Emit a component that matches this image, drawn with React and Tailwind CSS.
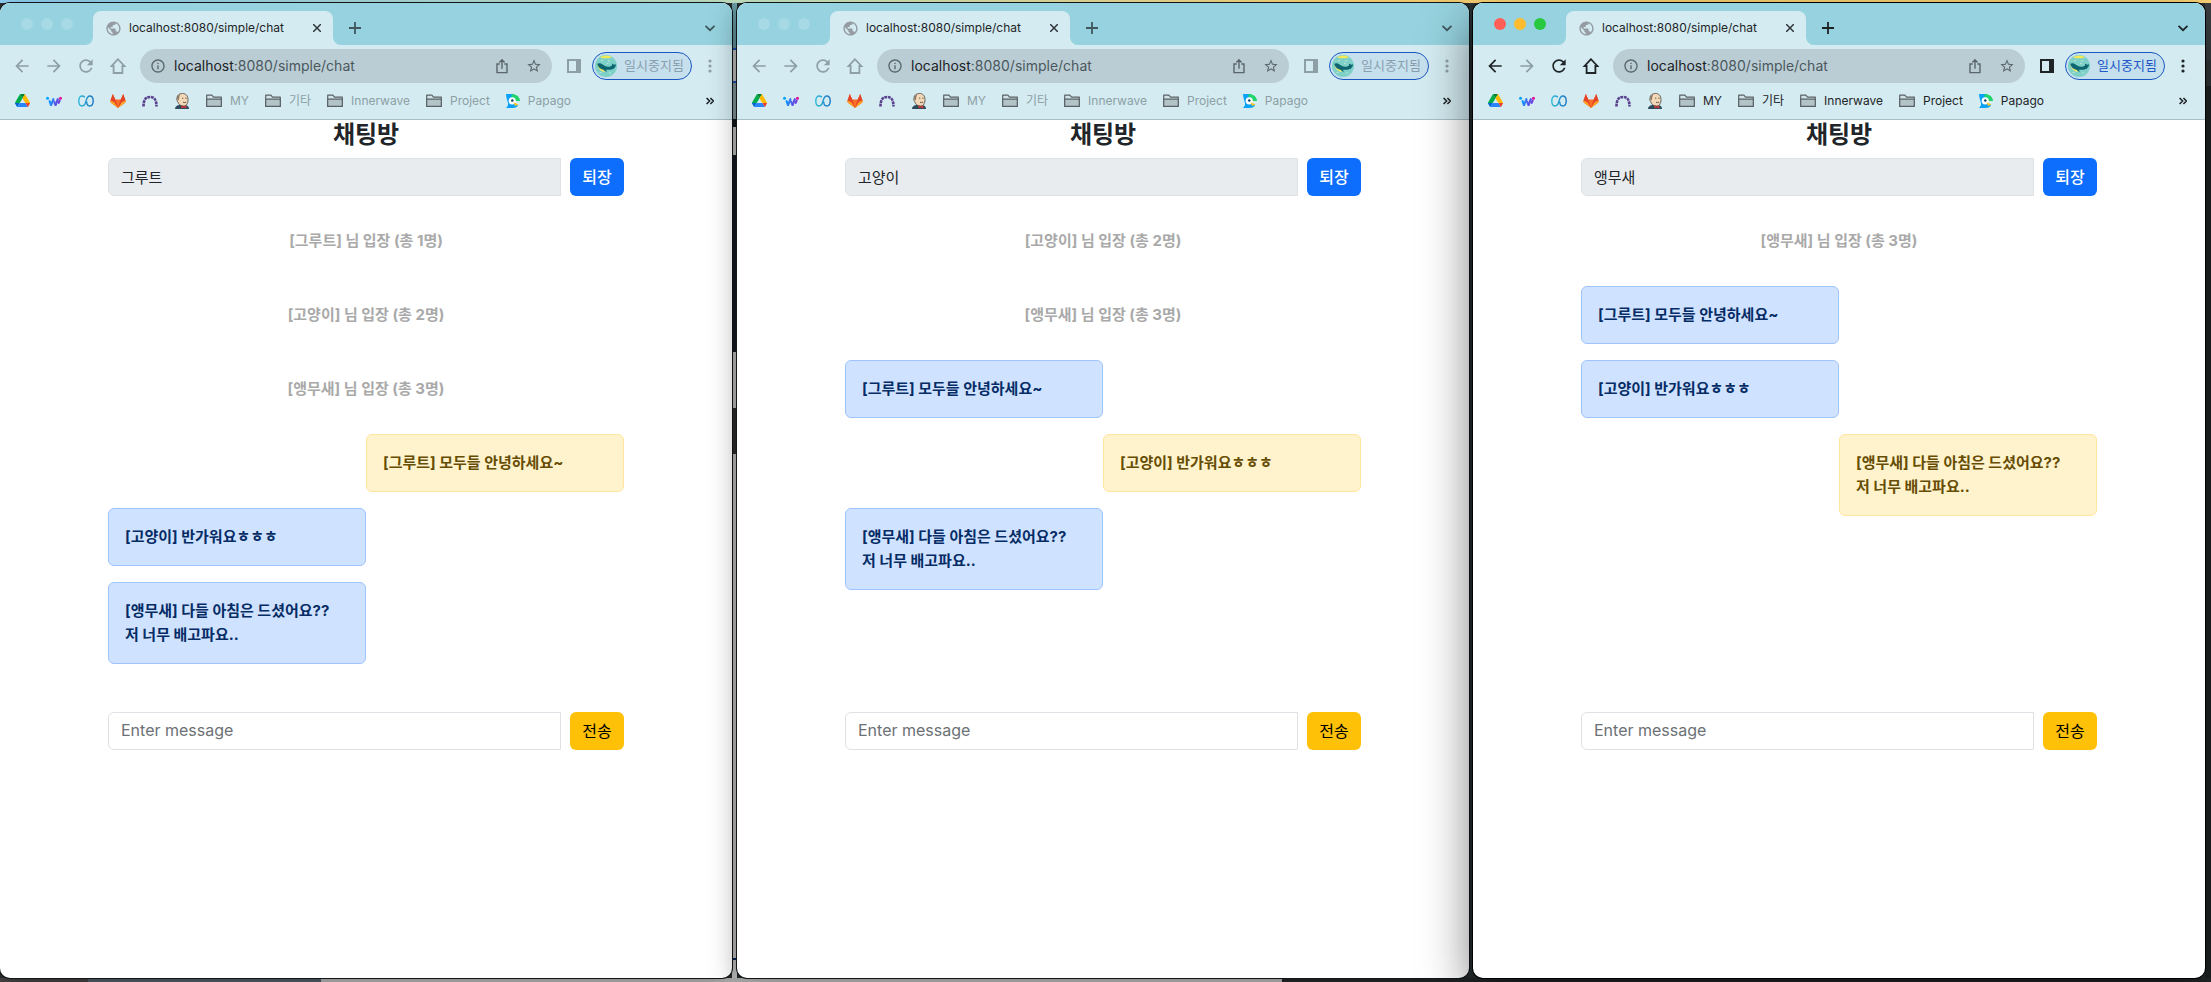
import React, { useId } from "react";

const windows = [
  {
    user: "그루트",
    active: false,
    messages: [
      { kind: "notice", lines: ["[그루트] 님 입장 (총 1명)"] },
      { kind: "notice", lines: ["[고양이] 님 입장 (총 2명)"] },
      { kind: "notice", lines: ["[앵무새] 님 입장 (총 3명)"] },
      { kind: "mine", lines: ["[그루트] 모두들 안녕하세요~"] },
      { kind: "other", lines: ["[고양이] 반가워요ㅎㅎㅎ"] },
      { kind: "other", lines: ["[앵무새] 다들 아침은 드셨어요??", "저 너무 배고파요.."] },
    ],
  },
  {
    user: "고양이",
    active: false,
    messages: [
      { kind: "notice", lines: ["[고양이] 님 입장 (총 2명)"] },
      { kind: "notice", lines: ["[앵무새] 님 입장 (총 3명)"] },
      { kind: "other", lines: ["[그루트] 모두들 안녕하세요~"] },
      { kind: "mine", lines: ["[고양이] 반가워요ㅎㅎㅎ"] },
      { kind: "other", lines: ["[앵무새] 다들 아침은 드셨어요??", "저 너무 배고파요.."] },
    ],
  },
  {
    user: "앵무새",
    active: true,
    messages: [
      { kind: "notice", lines: ["[앵무새] 님 입장 (총 3명)"] },
      { kind: "other", lines: ["[그루트] 모두들 안녕하세요~"] },
      { kind: "other", lines: ["[고양이] 반가워요ㅎㅎㅎ"] },
      { kind: "mine", lines: ["[앵무새] 다들 아침은 드셨어요??", "저 너무 배고파요.."] },
    ],
  },
];

function Icon({ d, className }) {
  return (
    <svg viewBox="0 0 24 24" fill="currentColor" className={className} aria-hidden="true">
      <path d={d} />
    </svg>
  );
}

const BACK = "M20 11H7.83l5.59-5.59L12 4l-8 8 8 8 1.41-1.41L7.83 13H20v-2z";
const FORWARD = "M4 11h12.17l-5.59-5.59L12 4l8 8-8 8-1.41-1.41L16.17 13H4v-2z";
const RELOAD =
  "M17.65 6.35C16.2 4.9 14.21 4 12 4c-4.42 0-7.99 3.58-7.99 8s3.57 8 7.99 8c3.73 0 6.84-2.55 7.73-6h-2.08c-.82 2.33-3.04 4-5.65 4-3.31 0-6-2.69-6-6s2.69-6 6-6c1.66 0 3.14.69 4.22 1.78L13 11h7V4l-2.35 2.35z";
const GLOBE =
  "M12 2C6.48 2 2 6.48 2 12s4.48 10 10 10 10-4.48 10-10S17.52 2 12 2zm-1 17.93c-3.95-.49-7-3.85-7-7.93 0-.62.08-1.21.21-1.79L9 15v1c0 1.1.9 2 2 2v1.93zm6.9-2.54c-.26-.81-1-1.39-1.9-1.39h-1v-3c0-.55-.45-1-1-1H8v-2h2c.55 0 1-.45 1-1V7h2c1.1 0 2-.9 2-2v-.41c2.93 1.19 5 4.06 5 7.41 0 2.08-.8 3.97-2.1 5.39z";
const STAR =
  "M22 9.24l-7.19-.62L12 2 9.19 8.63 2 9.24l5.46 4.73L5.82 21 12 17.27 18.18 21l-1.63-7.03L22 9.24zM12 15.4l-3.76 2.27 1-4.28-3.32-2.88 4.38-.38L12 6.1l1.71 4.04 4.38.38-3.32 2.88 1 4.28L12 15.4z";
const INFO =
  "M11 7h2v2h-2zm0 4h2v6h-2zm1-9C6.48 2 2 6.48 2 12s4.48 10 10 10 10-4.48 10-10S17.52 2 12 2zm0 18c-4.41 0-8-3.59-8-8s3.59-8 8-8 8 3.59 8 8-3.59 8-8 8z";

function HomeIcon() {
  return (
    <svg viewBox="0 0 20 20" className="size-5" fill="none" stroke="currentColor" strokeWidth="1.8" aria-hidden="true">
      <path d="M10 3.2 3.6 10h2v7h8.8v-7h2z" />
    </svg>
  );
}

function ShareIcon() {
  return (
    <svg viewBox="0 0 16 16" className="size-4" fill="none" stroke="currentColor" strokeWidth="1.4" aria-hidden="true">
      <path d="M5.6 6H3v8.6h10V6h-2.6M8 10.8V2M5.4 4.4 8 1.8l2.6 2.6" />
    </svg>
  );
}

function PanelIcon() {
  return (
    <svg viewBox="0 0 14 14" className="size-[14px]" fill="currentColor" aria-hidden="true">
      <path fillRule="evenodd" d="M0 0h14v14H0zM2 2v10h7V2z" />
    </svg>
  );
}

function Chevron() {
  return (
    <svg viewBox="0 0 12 12" className="size-3" fill="none" stroke="currentColor" strokeWidth="1.7" aria-hidden="true">
      <path d="M1.5 3.8 6 8.2l4.5-4.4" />
    </svg>
  );
}

function Avatar() {
  return (
    <svg viewBox="0 0 22 22" className="size-[22px]" aria-hidden="true">
      <circle cx="11" cy="11" r="11" fill="#7fd0c6" />
      <path d="M5 1.9q6-3 12 0-1 1.400-6 1.400T5 1.900z" fill="#f3ea54" />
      <path d="M2.500 9.500c.5 4 3 7 7.500 7.500l-1.500-3z" fill="#f0e86a" />
      <path
        d="M2.200 8.800C4 7.600 6.200 8.200 8 9.800s4 2.200 6.500 1.900c2-.3 2.800-1.400 2.700-3.200l1.900 1.300 2-.5c-.3 2.800-2 4.800-4.800 5.300-2 .4-3.800.1-5.300.1l.9 2.600-3.600-2.600C5 14.300 3 12 2.200 8.800z"
        fill="#0e6671"
      />
      <path d="M6 5.500h2M13 6h2M4.500 17.500h2M14 18h2M12 8.500h1.500" stroke="#c5efe9" strokeWidth=".8" />
    </svg>
  );
}

function DriveIcon() {
  return (
    <svg viewBox="0 0 87.3 78" className="w-[15px]" aria-hidden="true">
      <path d="m6.6 66.85 3.85 6.65c.8 1.4 1.95 2.5 3.3 3.3L27.5 53H0c0 1.55.4 3.1 1.2 4.5z" fill="#0066da" />
      <path d="M43.65 25 29.9 1.2c-1.35.8-2.5 1.9-3.3 3.3L1.2 48.5A9 9 0 0 0 0 53h27.5z" fill="#00ac47" />
      <path d="M73.55 76.8c1.35-.8 2.5-1.9 3.3-3.3l1.6-2.75L86.1 57.5c.8-1.4 1.2-2.95 1.2-4.5H59.8l5.85 11.5z" fill="#ea4335" />
      <path d="M43.65 25 57.4 1.2C56.05.4 54.5 0 52.9 0H34.4c-1.6 0-3.15.45-4.5 1.2z" fill="#00832d" />
      <path d="M59.8 53H27.5L13.75 76.8c1.35.8 2.9 1.2 4.5 1.2h50.8c1.6 0 3.15-.45 4.5-1.2z" fill="#2684fc" />
      <path d="m73.4 26.5-12.7-22c-.8-1.4-1.95-2.5-3.3-3.3L43.65 25l16.15 28h27.45c0-1.55-.4-3.1-1.2-4.5z" fill="#ffba00" />
    </svg>
  );
}

function WaveIcon() {
  return (
    <svg viewBox="0 0 16 16" className="size-4" strokeWidth="2.1" strokeLinecap="round" fill="none" aria-hidden="true">
      <path d="m3.600 8.200 1.300 3.600" stroke="#0f95ff" />
      <path d="m5.200 11.800 2.200-5.600" stroke="#2f7df4" />
      <path d="m8.200 8.600 1.200 3.200" stroke="#4b63ea" />
      <path d="m9.700 11.800 2.100-5.600" stroke="#5b50e4" />
      <path d="m12.700 9.800.9-2.300" stroke="#6a3fe0" />
      <circle cx="1.500" cy="5.200" r="1.500" fill="#00a3ff" />
      <circle cx="14.500" cy="5.200" r="1.500" fill="#e6129b" />
    </svg>
  );
}

function LoopIcon() {
  const id = useId();
  return (
    <svg viewBox="0 0 16 16" className="size-4" aria-hidden="true">
      <defs>
        <linearGradient id={id} x1="0" x2="1">
          <stop offset="0" stopColor="#2bb8d8" />
          <stop offset="1" stopColor="#1b74c4" />
        </linearGradient>
      </defs>
      <path
        d="M6.800 4.200C5.800 3.200 4.600 3 3.900 3 2 3 .8 5 .8 8s1.200 5 3.100 5C7.500 13 7.200 10 8.100 7.500 8.900 5 9.500 3 11.700 3c2 0 3.500 2 3.500 5s-1.500 5-3.500 5-3-2-3-4.500"
        fill="none"
        stroke={"url(#" + id + ")"}
        strokeWidth="1.4"
      />
    </svg>
  );
}

function GitlabIcon() {
  return (
    <svg viewBox="0 0 16 16" className="size-4" aria-hidden="true">
      <path d="M2.8 1 .5 7.5c-.3 1 0 2 .8 2.6L8 15l6.7-4.9c.8-.6 1.1-1.6.8-2.6L13.2 1l-2.5 5.5H5.3z" fill="#fc6d26" />
      <path d="M2.8 1 .5 7.5 4 9l4 6-2.7-8.5zM13.2 1l2.3 6.5L12 9l-4 6 2.7-8.5z" fill="#e24329" />
      <path d="m.5 7.5 3.7 1.7L8 15l-6.7-4.9C.5 9.5.2 8.5.5 7.5zM15.5 7.5l-3.7 1.7L8 15l6.7-4.900c.8-.6 1.1-1.6.8-2.6z" fill="#fca326" />
    </svg>
  );
}

function ArchIcon() {
  return (
    <svg viewBox="0 0 16 16" className="size-4" aria-hidden="true">
      <path d="M1.5 13.500C1.500 7 3.500 4 8 4s6.500 3 6.500 9.500" fill="none" stroke="#58408f" strokeWidth="2.600" strokeDasharray="2.800 .7" />
    </svg>
  );
}

function ButlerIcon() {
  return (
    <svg viewBox="0 0 16 16" className="size-4" aria-hidden="true">
      <path d="M1 16c0-2 1.5-3.5 4-4l7 .2c2 .6 3 1.8 3 3.8z" fill="#2d4a5e" />
      <path d="M3 5C3 2 5.5.5 8.5.5S14 2.5 14 6.500c0 4-1.500 6.500-4.500 6.500C6 13 4.500 11 4 9 3 8.500 2.500 6 3 5z" fill="#f3d9b8" stroke="#3c342f" strokeWidth=".7" />
      <path d="M3.2 4.500C4 2.500 5 2 6 2 5 3.500 5.300 5 4.800 7.500 4 7 3 6 3.200 4.500z" fill="#8c7564" />
      <path d="M8 5.200h1.300M11.300 5.200h1.300M9 9.200q1.700.8 3.200 0" stroke="#3c342f" strokeWidth=".8" fill="none" />
      <path d="m7.500 12.500 2.300 1 2.500-1v3l-2.500-1-2.300 1z" fill="#d33833" />
    </svg>
  );
}

function PapagoIcon() {
  return (
    <svg viewBox="0 0 14 14" className="size-[14px]" aria-hidden="true">
      <path d="M0 0h8v9l4 2.500C11 13.200 9 14 6.500 14H0c2-2 2.600-3.500 1.700-6C.8 5.500.3 3 0 0z" fill="#0ba1f7" />
      <path d="M5.500.3C10 0 14 2.500 14 7H9.500C8.500 5 7.500 3.500 5.500 3z" fill="#20d66b" />
      <circle cx="6.200" cy="6.800" r="3.600" fill="#fff" />
      <circle cx="6.300" cy="6.500" r="1.200" fill="#123c66" />
      <path d="M7.500 8.200 12.500 10.500 9 12z" fill="#ffc61a" />
    </svg>
  );
}

function FolderIcon() {
  return (
    <svg viewBox="0 0 16 14" className="w-4" fill="#b3c4c9" stroke="#5b6266" strokeWidth="1.2" strokeLinejoin="round" aria-hidden="true">
      <path d="M.7 12.4V1.200h5.200l1.600 1.900h7.800v9.300z" fill="#cfe3e8" />
      <path d="M.7 12.4V5.200h14.600v7.200z" />
    </svg>
  );
}

const siteIcons = [
  ["Drive", DriveIcon],
  ["Wave", WaveIcon],
  ["Loop", LoopIcon],
  ["GitLab", GitlabIcon],
  ["Arch", ArchIcon],
  ["Jenkins", ButlerIcon],
];

const folders = ["MY", "기타", "Innerwave", "Project"];

function TabStrip({ active }) {
  return (
    <div className="flex h-[42px] items-end bg-[#96d2df]">
      <div className="flex h-[42px] w-[85px] items-center gap-2 pl-[21px]">
        <button aria-label="Close window" className={active ? "size-3 rounded-full bg-[#ff5f57]" : "size-3 rounded-full bg-[#a7dae4]"} />
        <button aria-label="Minimize window" className={active ? "size-3 rounded-full bg-[#febc2e]" : "size-3 rounded-full bg-[#a7dae4]"} />
        <button aria-label="Zoom window" className={active ? "size-3 rounded-full bg-[#28c840]" : "size-3 rounded-full bg-[#a7dae4]"} />
      </div>
      <svg viewBox="0 0 8 8" className="size-2" fill="#d3ebf1" aria-hidden="true">
        <path d="M8 0v8H0a8 8 0 0 0 8-8z" />
      </svg>
      <div className="flex h-[34px] w-60 items-center rounded-t-lg bg-[#d3ebf1] pr-2 pl-3">
        <Icon d={GLOBE} className="size-[17px] shrink-0 text-[#949ba1]" />
        <span className="ml-[7px] flex-1 text-xs whitespace-nowrap text-[#1f2427]">localhost:8080/simple/chat</span>
        <button aria-label="Close tab" className="flex size-4 items-center justify-center text-[#30363a]">
          <svg viewBox="0 0 8 8" className="size-2" stroke="currentColor" strokeWidth="1.5" aria-hidden="true">
            <path d="m0 0 8 8M8 0 0 8" />
          </svg>
        </button>
      </div>
      <svg viewBox="0 0 8 8" className="size-2" fill="#d3ebf1" aria-hidden="true">
        <path d="M0 0v8h8a8 8 0 0 1-8-8z" />
      </svg>
      <div className={active ? "flex h-[34px] flex-1 items-center justify-between pr-4 pl-2 text-[#1d2225]" : "flex h-[34px] flex-1 items-center justify-between pr-4 pl-2 text-[#40565d]"}>
        <button aria-label="New tab" className="flex size-3 items-center">
          <svg viewBox="0 0 12 12" className="size-3" stroke="currentColor" strokeWidth="1.8" aria-hidden="true">
            <path d="M6 0v12M0 6h12" />
          </svg>
        </button>
        <button aria-label="Search tabs">
          <Chevron />
        </button>
      </div>
    </div>
  );
}

function Toolbar({ active }) {
  const strong = active ? "text-[#1f2427]" : "text-[#8e9fa5]";
  return (
    <div className={"flex h-[42px] items-center px-3 " + strong}>
      <div className="flex gap-3">
        <button aria-label="Back"><Icon d={BACK} className="size-5" /></button>
        <button aria-label="Forward" className="text-[#8e9fa5]"><Icon d={FORWARD} className="size-5" /></button>
        <button aria-label="Reload"><Icon d={RELOAD} className="size-5" /></button>
        <button aria-label="Home"><HomeIcon /></button>
      </div>
      <div className="ml-3 flex h-[34px] min-w-0 flex-1 items-center rounded-full bg-[#bacdd4] px-[10px] text-[#5a666b]">
        <Icon d={INFO} className="size-4 shrink-0" />
        <p className="ml-2 min-w-0 flex-1 text-sm whitespace-nowrap text-[#4c585d]">
          <span className="text-[#1d2225]">localhost</span>:8080/simple/chat
        </p>
        <button aria-label="Share"><ShareIcon /></button>
        <button aria-label="Bookmark this page" className="ml-4"><Icon d={STAR} className="size-4" /></button>
      </div>
      <button aria-label="Side panel" className="ml-3 flex size-5 items-center justify-center"><PanelIcon /></button>
      <button className="ml-2 flex h-7 w-[100px] items-center rounded-full border border-[#1b57c4] bg-[#c6e0ee] pl-[2px]">
        <Avatar />
        <span className={active ? "flex-1 text-center text-[13px] text-[#2058c7]" : "flex-1 text-center text-[13px] text-[#8a9fae]"}>일시중지됨</span>
      </button>
      <button aria-label="Menu" className="ml-2 flex size-5 items-center justify-center">
        <svg viewBox="0 0 4 14" className="h-[14px]" fill="currentColor" aria-hidden="true">
          <circle cx="2" cy="2" r="1.6" />
          <circle cx="2" cy="7" r="1.6" />
          <circle cx="2" cy="12" r="1.6" />
        </svg>
      </button>
    </div>
  );
}

function Bookmarks({ active }) {
  return (
    <nav
      aria-label="Bookmarks"
      className={
        active
          ? "flex h-[33px] items-center gap-4 border-b border-[#a7bfc6] pr-[18px] pb-[5px] pl-[14px] text-xs text-[#1f2427]"
          : "flex h-[33px] items-center gap-4 border-b border-[#a7bfc6] pr-[18px] pb-[5px] pl-[14px] text-xs text-[#8e9fa5]"
      }
    >
      {siteIcons.map(([name, Glyph]) => (
        <a key={name} href="#" aria-label={name} className="flex size-4 items-center justify-center">
          <Glyph />
        </a>
      ))}
      {folders.map((name) => (
        <button key={name} className="flex items-center gap-2 whitespace-nowrap">
          <FolderIcon />
          {name}
        </button>
      ))}
      <a href="#" className="flex items-center gap-2">
        <PapagoIcon />
        Papago
      </a>
      <button aria-label="More bookmarks" className="ml-auto text-[#1f2427]">
        <svg viewBox="0 0 8 8" className="size-2" fill="none" stroke="currentColor" strokeWidth="1.6" aria-hidden="true">
          <path d="m.6 1 3 3-3 3M4.4 1l3 3-3 3" />
        </svg>
      </button>
    </nav>
  );
}

function Message({ kind, lines }) {
  const base = "rounded-md border p-4 text-[15px] leading-6 font-bold ";
  const look =
    kind === "notice"
      ? "border-transparent text-center text-[#a9a9a9]"
      : kind === "mine"
        ? "ml-auto w-1/2 border-[#ffe69c] bg-[#fff3cd] text-[#664d03]"
        : "w-1/2 border-[#9ec5fe] bg-[#cfe2ff] text-[#052c65]";
  return (
    <li className={base + look}>
      {lines.map((line) => (
        <p key={line}>{line}</p>
      ))}
    </li>
  );
}

function ChatRoom({ user, messages }) {
  return (
    <main className="mx-auto w-full max-w-[540px] px-3 text-[#212529]">
      <h1 className="text-center text-2xl leading-[30px] font-bold">채팅방</h1>
      <form className="mt-2 flex gap-[9px]" onSubmit={(e) => e.preventDefault()}>
        <input
          aria-label="Nickname"
          readOnly
          value={user}
          className="h-[38px] min-w-0 flex-1 rounded-l-md border border-[#dee2e6] bg-[#e9ecef] px-3 pb-[2px] text-[15px] outline-none"
        />
        <button className="w-[54px] rounded-md bg-[#0d6efd] text-base font-medium text-white">퇴장</button>
      </form>
      <ul className="flex min-h-[516px] flex-col gap-4 py-4">
        {messages.map((m, i) => (
          <Message key={i} kind={m.kind} lines={m.lines} />
        ))}
      </ul>
      <form className="flex gap-[9px]" onSubmit={(e) => e.preventDefault()}>
        <input
          aria-label="Message"
          placeholder="Enter message"
          className="h-[38px] min-w-0 flex-1 rounded-l-md border border-[#dee2e6] bg-white px-3 pb-[2px] text-base outline-none placeholder:text-[#6c7176]"
        />
        <button className="w-[54px] rounded-md bg-[#ffc107] text-base text-black">전송</button>
      </form>
    </main>
  );
}

function BrowserWindow({ user, active, messages }) {
  return (
    <section
      className={
        active
          ? "relative min-w-0 flex-1 rounded-[10px] shadow-[0_0_0_1px_#000,0_18px_50px_rgba(0,0,0,0.55)]"
          : "relative min-w-0 flex-1 rounded-[10px] shadow-[0_0_0_1px_#101517,0_8px_28px_rgba(0,0,0,0.35)]"
      }
    >
      <div className="h-full overflow-hidden rounded-[10px] bg-white">
        <header className="bg-[#d3ebf1]">
          <TabStrip active={active} />
          <Toolbar active={active} />
          <Bookmarks active={active} />
        </header>
        <ChatRoom user={user} messages={messages} />
      </div>
    </section>
  );
}

export default function App() {
  return (
    <div className="flex min-h-screen flex-col bg-[#2b3033] font-[Inter,'Noto_Sans_CJK_KR',sans-serif]">
      <div className="h-[3px] bg-linear-to-r from-[#8fd0f5] via-[#c9e8c4] via-35% to-[#ffd877] to-60%" />
      <div className="flex flex-1">
        <BrowserWindow {...windows[0]} />
        <div className="flex w-[5px] flex-col">
          <div className="h-[45px] bg-[#6fa3ad]" />
          <div className="h-[35px] border-y-2 border-[#1b57c4] bg-[#d5d5d5]" />
          <div className="h-9 bg-[#8fa6ac]" />
          <div className="h-2 bg-[#14181f]" />
          <div className="h-7 bg-[#d5d5d5]" />
          <div className="h-[197px] bg-[#171c26]" />
          <div className="h-14 bg-[#d5d5d5]" />
          <div className="h-[46px] bg-[#333333]" />
          <div className="flex-1 bg-[#d5d5d5]" />
          <div className="h-[2px] bg-[#0a2a66]" />
          <div className="h-[18px] bg-[#d5d5d5]" />
        </div>
        <BrowserWindow {...windows[1]} />
        <div className="w-1 bg-[#2b3638]" />
        <BrowserWindow {...windows[2]} />
        <div className="flex w-[6px] flex-col">
          <div className="h-[57px] bg-[#3c4043]" />
          <div className="h-[26px] bg-[#34383a]" />
          <div className="flex-1 bg-[#1f2424]" />
        </div>
      </div>
      <div className="flex h-1">
        <div className="w-[4%] bg-[#4a4648]" />
        <div className="w-[10.5%] bg-[#59646d]" />
        <div className="w-[43.5%] bg-[#c4c4c4]" />
        <div className="flex-1 bg-[#26292b]" />
      </div>
    </div>
  );
}
